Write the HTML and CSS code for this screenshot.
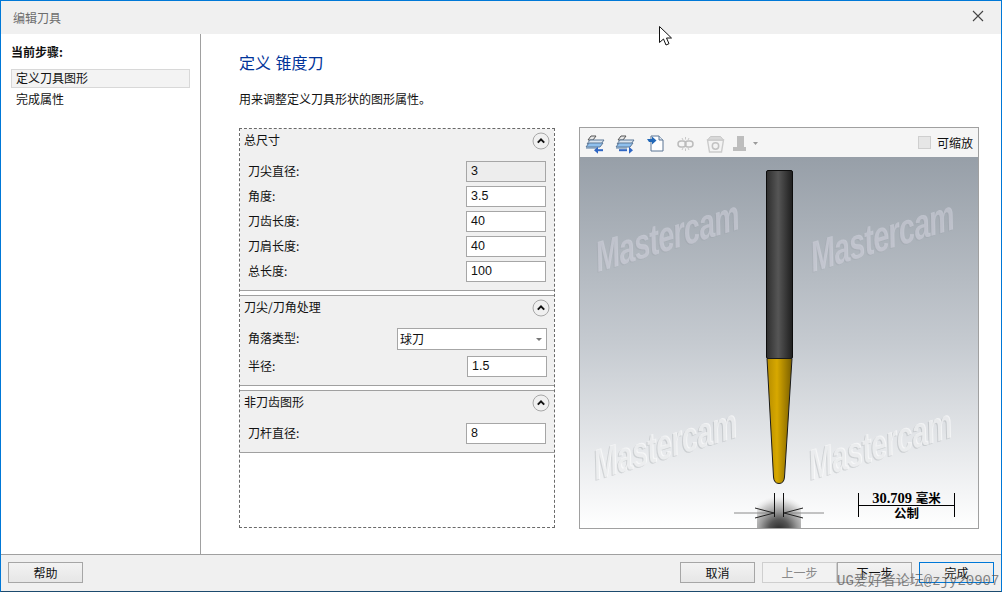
FILE: index.html
```html
<!DOCTYPE html>
<html lang="zh">
<head>
<meta charset="utf-8">
<title>编辑刀具</title>
<link rel="stylesheet" href="styles.css">
</head>
<body>
<div class="window">
  <header class="titlebar">
    <span class="title">编辑刀具</span>
    <svg class="close" width="12" height="12" viewBox="0 0 12 12"><path d="M1 1l10 10M11 1L1 11" stroke="#444" stroke-width="1.1" fill="none"/></svg>
  </header>
  <div class="main">
    <aside class="sidebar">
      <div class="steps-title">当前步骤:</div>
      <div class="step current">定义刀具图形</div>
      <div class="step">完成属性</div>
    </aside>
    <section class="content">
      <h1 class="heading">定义 锥度刀</h1>
      <p class="desc">用来调整定义刀具形状的图形属性。</p>
      <div class="columns">
        <div class="panel">
          <div class="group g1">
            <div class="group-head"><span>总尺寸</span><svg class="toggle" width="18" height="18" viewBox="0 0 18 18"><circle cx="9" cy="9" r="8" fill="#f0f0f0" stroke="#a8a8a8"/><path d="M5.800 10.600L9 7.400l3.200 3.200" fill="none" stroke="#111" stroke-width="2"/></svg></div>
            <div class="row"><label>刀尖直径:</label><div class="field ro">3</div></div>
            <div class="row"><label>角度:</label><div class="field">3.5</div></div>
            <div class="row"><label>刀齿长度:</label><div class="field">40</div></div>
            <div class="row"><label>刀肩长度:</label><div class="field">40</div></div>
            <div class="row"><label>总长度:</label><div class="field">100</div></div>
          </div>
          <div class="group g2">
            <div class="group-head"><span>刀尖/刀角处理</span><svg class="toggle" width="18" height="18" viewBox="0 0 18 18"><circle cx="9" cy="9" r="8" fill="#f0f0f0" stroke="#a8a8a8"/><path d="M5.800 10.600L9 7.400l3.200 3.200" fill="none" stroke="#111" stroke-width="2"/></svg></div>
            <div class="row sel-row"><label>角落类型:</label><div class="select"><span>球刀</span><i class="caret"></i></div></div>
            <div class="row r-row"><label>半径:</label><div class="field">1.5</div></div>
          </div>
          <div class="group g3">
            <div class="group-head"><span>非刀齿图形</span><svg class="toggle" width="18" height="18" viewBox="0 0 18 18"><circle cx="9" cy="9" r="8" fill="#f0f0f0" stroke="#a8a8a8"/><path d="M5.800 10.600L9 7.400l3.200 3.200" fill="none" stroke="#111" stroke-width="2"/></svg></div>
            <div class="row"><label>刀杆直径:</label><div class="field">8</div></div>
          </div>
        </div>
        <div class="preview">
          <div class="toolbar">
            <svg class="tool-icons" width="178" height="22" viewBox="0 0 178 22">
              <g>
                <path d="M6 8l3-4h5l-3 4z" fill="#e8e8e8" stroke="#555"/>
                <path d="M8 8h14l-3 4H5z" fill="#dce6f0" stroke="#5d7897"/>
                <path d="M7 11h14l-3 4H4z" fill="#8fc0ee" stroke="#5d7897"/>
                <path d="M4 16h11" stroke="#6d8fb5" stroke-width="1.2"/>
                <path d="M21 18.200h-7" stroke="#2f66c4" stroke-width="2"/>
                <path d="M16 14.700v7l-4-3.500z" fill="#2f66c4"/>
              </g>
              <g transform="translate(30 0)">
                <path d="M6 8l3-4h5l-3 4z" fill="#e8e8e8" stroke="#555"/>
                <path d="M8 8h14l-3 4H5z" fill="#dce6f0" stroke="#5d7897"/>
                <path d="M7 11h14l-3 4H4z" fill="#8fc0ee" stroke="#5d7897"/>
                <path d="M4 16h11" stroke="#6d8fb5" stroke-width="1.2"/>
                <path d="M7 18.200h8" stroke="#2f66c4" stroke-width="2"/>
                <path d="M17 14.700v7l4-3.500z" fill="#2f66c4"/>
              </g>
              <g transform="translate(61 0)">
                <path d="M8 4h8l4 4v11H8z" fill="#fff" stroke="#5a7494"/>
                <path d="M16 4v4h4" fill="#dde6f0" stroke="#5a7494"/>
                <path d="M4 7h5V4.500l4.500 4-4.500 4V10H6z" fill="#2268b8"/>
              </g>
              <g transform="translate(91 0)" fill="none" stroke="#bcbcbc">
                <rect x="5" y="9" width="8" height="6" rx="3" stroke-width="1.500"/>
                <rect x="12" y="9" width="8" height="6" rx="3" stroke-width="1.500"/>
                <path d="M12.500 5v2.500M9 6l1 2M16 6l-1 2M12.500 16.500V19M9 18l1-2M16 18l-1-2" stroke-width=".8"/>
              </g>
              <g transform="translate(119.500 0)">
                <path d="M6 8h16l-2 12H8z" fill="#f3f3f3" stroke="#cbcbcb" stroke-width="1.400"/>
                <path d="M6 8l3-3.500h10L22 8z" fill="#d8d8d8" stroke="#c8c8c8"/>
                <circle cx="14" cy="14" r="3.200" fill="none" stroke="#c2c2c2" stroke-width="1.500"/>
              </g>
              <path d="M155 4h7v11h2v4h-13v-4h4z" fill="#bdbdbd"/>
              <path d="M171 10h5l-2.500 3z" fill="#9a9a9a"/>
            </svg>
            <div class="zoomable"><i class="check"></i><span>可缩放</span></div>
          </div>
          <div class="viewport">
            <svg class="scene" width="399" height="371" viewBox="0 0 399 371">
              <defs>
                <linearGradient id="shank" x1="0" x2="1" y1="0" y2="0"><stop offset="0" stop-color="#2e2e2e"/><stop offset=".45" stop-color="#565656"/><stop offset="1" stop-color="#1e1e1e"/></linearGradient>
                <linearGradient id="flute" x1="0" x2="1" y1="0" y2="0"><stop offset="0" stop-color="#b58c00"/><stop offset=".4" stop-color="#d7a800"/><stop offset="1" stop-color="#7a5f00"/></linearGradient>
                <radialGradient id="shade" gradientUnits="userSpaceOnUse" cx="199" cy="373" r="34"><stop offset="0" stop-color="#2a2a2a"/><stop offset=".3" stop-color="#555"/><stop offset=".55" stop-color="#9a9a9a"/><stop offset=".8" stop-color="#d2d2d2"/><stop offset="1" stop-color="#e8e8e8" stop-opacity="0"/></radialGradient>
              </defs>
              <g class="wm">
                <text transform="translate(18 115) rotate(-17) skewX(-8) scale(1.1 1.55)">Mastercam</text>
                <text transform="translate(233 115) rotate(-17) skewX(-8) scale(1.1 1.55)">Mastercam</text>
              </g>
              <g class="wm low">
                <text transform="translate(16 323) rotate(-17) skewX(-8) scale(1.1 1.55)">Mastercam</text>
                <text transform="translate(231 323) rotate(-17) skewX(-8) scale(1.1 1.55)">Mastercam</text>
              </g>
              <rect x="186.500" y="13.500" width="26" height="188" rx="1.500" fill="url(#shank)" stroke="#0c0c0c"/>
              <path d="M187 201.500h25L204.500 320q-.5 6.500-5.500 6.500t-5.500-6.500z" fill="url(#flute)" stroke="#1b1b1b"/>
              <rect x="177" y="336" width="44" height="35" fill="url(#shade)"/>
              <path d="M154 356h40M204 356h40" stroke="#8a8a8a" fill="none"/>
              <path d="M194.500 336v24M203.500 336v24" stroke="#111" fill="none"/>
              <path d="M194 356l-19-5M194 356l-19 5M204 356l19-5M204 356l19 5" stroke="#222" fill="none"/>
              <path d="M278.500 336v24M374.500 336v24M278 348.500h97" stroke="#000" fill="none"/>
              <text class="dim" x="326.500" y="346" text-anchor="middle">30.709 <tspan class="dim-cjk">毫米</tspan></text>
              <text class="dim dim-cjk" x="326.500" y="361" text-anchor="middle">公制</text>
            </svg>
          </div>
        </div>
      </div>
    </section>
  </div>
  <footer class="footer">
    <button class="btn">帮助</button>
    <div class="spacer"></div>
    <button class="btn">取消</button>
    <button class="btn disabled">上一步</button>
    <button class="btn">下一步</button>
    <button class="btn primary">完成</button>
  </footer>
  <svg class="cursor" width="13" height="20" viewBox="0 0 13 20"><path d="M.5.500v16l4-3.500 2.500 6 3-1.300-2.500-5.700h5z" fill="#fff" stroke="#111"/></svg>
  <div class="forum">UG爱好者论坛@zjy20907</div>
</div>
</body>
</html>
```
FILE: styles.css
```css
* { box-sizing: border-box; }
html, body { margin: 0; padding: 0; }
body {
  width: 1002px;
  height: 592px;
  overflow: hidden;
  font-family: "Noto Sans CJK SC", "Liberation Sans", sans-serif;
  font-size: 12px;
  color: #111;
  background: #fff;
}
.window {
  position: relative;
  display: flex;
  flex-direction: column;
  width: 1002px;
  height: 592px;
  border: 1px solid #0078d7;
  border-bottom: 1px solid #1c4a6e;
}
.titlebar {
  flex: none;
  height: 33px;
  background: #f0f0f0;
  display: flex;
  align-items: center;
  justify-content: space-between;
  padding: 0 17px 0 12px;
}
.title { color: #6d6d6d; font-size: 12px; }
.close { margin-bottom: 3px; }
.main { flex: 1; display: flex; min-height: 0; }
.sidebar {
  flex: none;
  width: 200px;
  border-right: 1px solid #a0a0a0;
  padding: 9px 10px 0 10px;
}
.steps-title { font-weight: 700; height: 26px; line-height: 18px; }
.step { height: 19px; line-height: 17px; padding-left: 5px; margin-bottom: 2px; }
.step.current { background: #f3f3f3; outline: 1px solid #d8d8d8; outline-offset: -1px; line-height: 18px; }
.content { flex: 1; padding: 0 0 0 38px; }
.heading { margin: 17px 0 0; font-size: 16px; font-weight: 400; color: #003399; line-height: 22px; word-spacing: 1px; }
.desc { margin: 17px 0 0; line-height: 18px; }
.columns { display: flex; gap: 24px; margin-top: 20px; }
.panel {
  width: 316px;
  height: 400px;
  border: 1px dashed #6a6a6a;
  display: flex;
  flex-direction: column;
  gap: 4px;
}
.group { background: #f0f0f0; border-bottom: 1px solid #a0a0a0; padding: 0 8px 0 4px; }
.g1 { height: 162px; }
.g2 { height: 91px; border-top: 1px solid #a0a0a0; }
.g3 { height: 63px; border-top: 1px solid #a0a0a0; }
.group-head { display: flex; align-items: center; justify-content: space-between; height: 24px; margin-right: -4px; margin-bottom: 8px; }
.group-head span { margin-bottom: 2px; }
.g1 .group-head span { margin-bottom: 3px; }
.g2 .group-head { height: 23px; margin-bottom: 9px; }
.g3 .group-head { height: 23px; margin-bottom: 9px; }
.row { display: flex; align-items: center; justify-content: space-between; height: 21px; margin-bottom: 4px; padding-left: 4px; }
.sel-row { margin-bottom: 6px; height: 22px; margin-right: -1px; }
.r-row { margin-right: -1px; }
label { line-height: 18px; margin-bottom: 2px; }
.field {
  width: 80px;
  height: 21px;
  background: #fff;
  border: 1px solid #a6a6a6;
  padding-left: 4px;
  line-height: 19px;
  font-family: "Liberation Sans", sans-serif;
  font-size: 12.5px;
}
.field.ro { background: #ededed; }
.select {
  width: 150px;
  height: 22px;
  background: #fff;
  border: 1px solid #a6a6a6;
  padding-left: 2px;
  line-height: 20px;
  display: flex;
  align-items: center;
  justify-content: space-between;
}
.caret { width: 0; height: 0; border: 3px solid transparent; border-top: 3px solid #777; margin: 3px 4px 0 0; }
.preview {
  width: 400px;
  height: 402px;
  margin-top: -1px;
  border: 1px solid #a0a0a0;
  display: flex;
  flex-direction: column;
}
.toolbar {
  flex: none;
  height: 29px;
  background: #f5f5f5;
  display: flex;
  align-items: center;
  justify-content: space-between;
  padding: 0 5px 0 2px;
}
.tool-icons { display: block; }
.zoomable { display: flex; align-items: center; gap: 6px; }
.check { width: 13px; height: 13px; background: #e6e6e6; border: 1px solid #cfcfcf; }
.viewport {
  flex: 1;
  min-height: 0;
  background: linear-gradient(#979fa8 0%, #c5cad0 50%, #fff 100%);
}
.scene { display: block; }
.wm { filter: drop-shadow(-1px 1px 0 rgba(120, 125, 135, .35)); }
.wm.low { filter: drop-shadow(-1px 1px 0 rgba(140, 145, 150, .5)); }
.wm text {
  font-family: "Liberation Sans", sans-serif;
  font-size: 27px;
  font-weight: 700;
  font-style: italic;
  fill: #f6f4ff;
  fill-opacity: .32;
  letter-spacing: -.6px;
}
.wm.low text { fill: #fff; fill-opacity: .6; }
.dim {
  font-family: "Liberation Serif", "Noto Sans CJK SC", serif;
  font-size: 14.5px;
  font-weight: 700;
  fill: #000;
}
.dim-cjk { font-size: 12.5px; }
.footer {
  flex: none;
  height: 37px;
  background: #f0f0f0;
  border-top: 1px solid #a0a0a0;
  display: flex;
  align-items: flex-start;
  gap: 7px;
  padding: 7px 7px 0;
}
.spacer { flex: 1; }
.btn {
  width: 75px;
  height: 21px;
  padding: 0;
  font: inherit;
  color: #111;
  background: linear-gradient(#f3f3f3, #e6e6e6);
  border: 1px solid #a6a6a6;
  border-radius: 0;
}
.btn.disabled { color: #8a8a8a; background: #f2f2f2; border-color: #cfcfcf; margin-right: -7px; }
.btn.primary { border-color: #0078d7; }
.cursor { position: absolute; left: 658px; top: 25px; }
.forum {
  position: absolute;
  left: 836px;
  top: 571px;
  font-family: "Liberation Mono", "Noto Sans CJK SC", monospace;
  font-size: 14px;
  line-height: 18px;
  color: rgba(80, 80, 80, .7);
  white-space: nowrap;
}
```
